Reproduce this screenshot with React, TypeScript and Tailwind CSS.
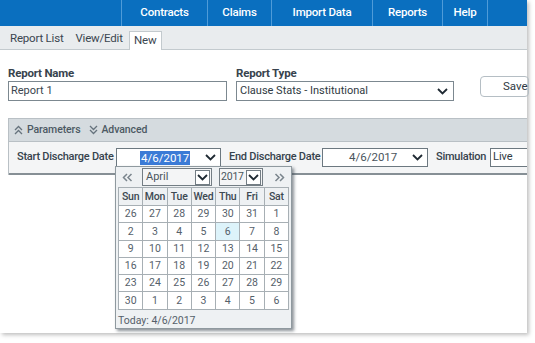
import React from "react";

const font = { fontFamily: "Roboto, 'Liberation Sans', sans-serif" };

function Chevron({ className = "" }: { className?: string }) {
  return (
    <svg width="11" height="7" viewBox="0 0 11 7" className={className}>
      <path d="M1 1 L5.5 5.5 L10 1" fill="none" stroke="#1f2a33" strokeWidth="1.8" />
    </svg>
  );
}

function DoubleUp() {
  return (
    <svg width="9" height="10" viewBox="0 0 9 10">
      <path d="M1 5 L4.5 1.5 L8 5 M1 9 L4.5 5.5 L8 9" fill="none" stroke="#66737d" strokeWidth="1.3" />
    </svg>
  );
}
function DoubleDown() {
  return (
    <svg width="9" height="10" viewBox="0 0 9 10">
      <path d="M1 1 L4.5 4.5 L8 1 M1 5 L4.5 8.5 L8 5" fill="none" stroke="#66737d" strokeWidth="1.3" />
    </svg>
  );
}
function DoubleLeft() {
  return (
    <svg width="11" height="9" viewBox="0 0 11 9">
      <path d="M5 1 L1.5 4.5 L5 8 M9.5 1 L6 4.5 L9.5 8" fill="none" stroke="#7a858d" strokeWidth="1.5" />
    </svg>
  );
}
function DoubleRight() {
  return (
    <svg width="11" height="9" viewBox="0 0 11 9">
      <path d="M1.5 1 L5 4.5 L1.5 8 M6 1 L9.5 4.5 L6 8" fill="none" stroke="#7a858d" strokeWidth="1.5" />
    </svg>
  );
}

const navItems: { label: string; w: string }[] = [
  { label: "Contracts", w: "w-[86px]" },
  { label: "Claims", w: "w-[64px]" },
  { label: "Import Data", w: "w-[101px]" },
  { label: "Reports", w: "w-[70px]" },
  { label: "Help", w: "w-[45px]" },
];

const weeks = [
  ["26", "27", "28", "29", "30", "31", "1"],
  ["2", "3", "4", "5", "6", "7", "8"],
  ["9", "10", "11", "12", "13", "14", "15"],
  ["16", "17", "18", "19", "20", "21", "22"],
  ["23", "24", "25", "26", "27", "28", "29"],
  ["30", "1", "2", "3", "4", "5", "6"],
];
const days = ["Sun", "Mon", "Tue", "Wed", "Thu", "Fri", "Sat"];

export default function App() {
  return (
    <div className="w-[535px] h-[343px] bg-white relative overflow-hidden" style={font}>
      <div className="w-[527px] h-[333px] bg-white flex flex-col shadow-[2px_2px_4px_rgba(0,0,0,0.25)] relative">
        {/* nav */}
        <div className="h-[26px] bg-[#0a6fbf] flex shrink-0">
          <div className="w-[121px]" />
          {navItems.map((n) => (
            <div
              key={n.label}
              className={`${n.w} border-l border-[#4f9bd8] flex items-center justify-center text-white text-[11.5px] font-medium tracking-[-0.2px] whitespace-nowrap`}
            >
              {n.label}
            </div>
          ))}
          <div className="flex-1 border-l border-[#4f9bd8]" />
        </div>
        {/* tabs */}
        <div className="h-[24px] bg-[#e9ecee] border-b border-[#c3cace] flex items-end pl-[3px] shrink-0 text-[11.5px] text-[#3b4650] tracking-[-0.2px] whitespace-nowrap">
          <div className="px-[7px] h-[20px] flex items-center">Report List</div>
          <div className="px-[5px] h-[20px] flex items-center">View/Edit</div>
          <div className="ml-[1px] w-[33px] h-[19px] -mb-px bg-white border border-b-0 border-[#c3cace] flex items-center justify-center">
            New
          </div>
        </div>
        {/* form */}
        <div className="flex pl-[8px] pt-[16px] gap-[9px] shrink-0">
          <div className="flex flex-col">
            <div className="text-[11.5px] font-bold text-[#37434d] leading-[14px] mb-[1px] tracking-[-0.2px] whitespace-nowrap">Report Name</div>
            <div className="w-[219px] h-[20px] border border-[#7c8890] text-[11px] text-[#3a454e] flex items-center px-[2px]">
              Report 1
            </div>
          </div>
          <div className="flex flex-col">
            <div className="text-[11.5px] font-bold text-[#37434d] leading-[14px] mb-[1px] tracking-[-0.2px] whitespace-nowrap">Report Type</div>
            <div className="w-[218px] h-[20px] border border-[#7c8890] text-[11px] text-[#2f3a42] flex items-center pl-[3px] pr-[5px] justify-between whitespace-nowrap">
              <span>Clause Stats - Institutional</span>
              <Chevron />
            </div>
          </div>
          <div className="ml-[17px] mt-[10px] w-[60px] h-[21px] border border-[#b5bec4] rounded-[4px] text-[11.5px] text-[#2f3a42] flex items-center pl-[22px]">
            Save
          </div>
        </div>
        {/* parameters */}
        <div className="ml-[8px] mt-[17px] border-l border-t border-[#b9c0c5] shrink-0">
          <div className="h-[23px] bg-[#d5dbdf] flex items-center pl-[5px] gap-[4px] text-[10.5px] font-medium text-[#4c5963] border-b border-[#b9c0c5] tracking-[-0.1px] whitespace-nowrap">
            <DoubleUp />
            <span>Parameters</span>
            <span className="ml-[4px] flex items-center"><DoubleDown /></span>
            <span>Advanced</span>
          </div>
          <div className="h-[33px] bg-[#f4f5f6] border-b-2 border-[#868f95] flex items-center pl-[8px] text-[11px] text-[#37434d] whitespace-nowrap">
            <span className="font-medium w-[99px] tracking-[-0.25px]">Start Discharge Date</span>
            <div className="w-[105px] h-[19px] border border-[#6c7880] bg-white flex items-center pl-[23px] pr-[4px] text-[11.5px]">
              <span className="bg-[#3b7bd6] text-white px-[1px] leading-[14px]">4/6/2017</span>
              <span className="flex-1" />
              <Chevron />
            </div>
            <span className="font-medium ml-[8px] w-[93px] tracking-[-0.25px]">End Discharge Date</span>
            <div className="w-[106px] h-[19px] border border-[#6c7880] bg-white flex items-center pl-[26px] pr-[4px] text-[11.5px]">
              <span className="text-[#4a555d]">4/6/2017</span>
              <span className="flex-1" />
              <Chevron />
            </div>
            <span className="font-medium ml-[8px] w-[54px] tracking-[-0.25px]">Simulation</span>
            <div className="flex-1 h-[19px] border border-r-0 border-[#6c7880] bg-white flex items-center pl-[2px] text-[#2f3a42]">
              Live
            </div>
          </div>
        </div>
        <div className="flex-1" />

        {/* calendar popup */}
        <div className="absolute left-[115px] top-[166px] w-[177px] h-[163px] bg-[#eef1f3] border border-[#8f999f] shadow-[2px_2px_3px_rgba(60,70,80,0.6)] flex flex-col">
          <div className="h-[21px] flex items-center pl-[6px] pr-[6px] mt-[1px] whitespace-nowrap">
            <span className="w-[20px] flex items-center"><DoubleLeft /></span>
            <div className="w-[70px] h-[18px] border border-[#737d84] bg-[#f4f5f6] flex items-center justify-between pl-[3px] text-[11px] text-[#4a555d]">
              <span>April</span>
              <span className="w-[15px] h-[15px] border border-[#737d84] bg-white flex items-center justify-center mr-[1px]">
                <Chevron />
              </span>
            </div>
            <div className="ml-[7px] w-[44px] h-[18px] border border-[#737d84] bg-[#f4f5f6] flex items-center pl-[1px] text-[10.5px] text-[#4a555d] tracking-[-0.2px]">
              <span>2017</span>
              <span className="flex-1" />
              <span className="w-[15px] h-[15px] border border-[#737d84] bg-white flex items-center justify-center mr-[1px] shrink-0">
                <Chevron />
              </span>
            </div>
            <span className="ml-[11px] flex items-center"><DoubleRight /></span>
          </div>
          <div className="mx-[2px] mt-[1px] grid grid-cols-7 border-l border-t border-[#a7afb4] text-[10.5px]">
            {days.map((d) => (
              <div key={d} className="h-[18px] border-r border-b border-[#a7afb4] bg-[#eef1f3] flex items-center justify-center font-medium text-[#3d4952] tracking-[-0.2px]">
                {d}
              </div>
            ))}
            {weeks.flat().map((d, i) => (
              <div
                key={i}
                className={`h-[17.3px] border-r border-b border-[#a7afb4] flex items-center justify-center text-[#55606a] ${
                  i === 11 ? "bg-[#ddf3fa]" : "bg-white"
                }`}
              >
                {d}
              </div>
            ))}
          </div>
          <div className="pl-[2px] mt-[3px] text-[10.5px] text-[#55606a] whitespace-nowrap">Today: 4/6/2017</div>
        </div>
      </div>
    </div>
  );
}
